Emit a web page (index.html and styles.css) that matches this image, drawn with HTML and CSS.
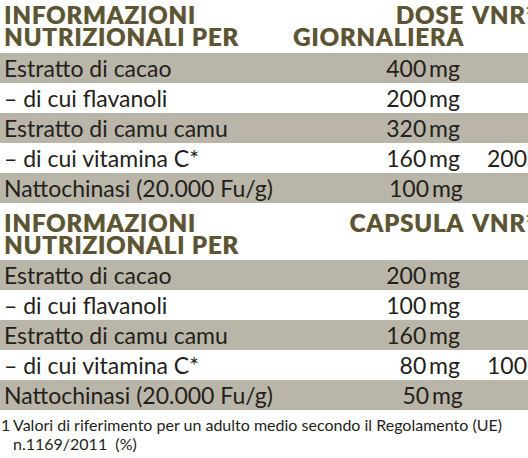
FILE: index.html
```html
<!DOCTYPE html>
<html lang="it">
<head>
    <meta charset="UTF-8">
    <meta name="viewport" content="width=device-width, initial-scale=1.0">
    <title>Informazioni nutrizionali</title>
    <link rel="stylesheet" href="styles.css">
</head>
<body>
    <div class="sheet">

        <!-- Per dose giornaliera -->
        <div class="head first">
            <div class="h-label">INFORMAZIONI<br>NUTRIZIONALI PER</div>
            <div class="h-dose">DOSE<br>GIORNALIERA</div>
            <div class="h-vnr">VNR<sup>1</sup></div>
        </div>
        <div class="row shade">
            <div class="label">Estratto di cacao</div>
            <div class="dose">400&#8201;mg</div>
            <div class="vnr"></div>
        </div>
        <div class="row">
            <div class="label">– di cui flavanoli</div>
            <div class="dose">200&#8201;mg</div>
            <div class="vnr"></div>
        </div>
        <div class="row shade">
            <div class="label">Estratto di camu camu</div>
            <div class="dose">320&#8201;mg</div>
            <div class="vnr"></div>
        </div>
        <div class="row">
            <div class="label">– di cui vitamina C*</div>
            <div class="dose">160&#8201;mg</div>
            <div class="vnr">200 %</div>
        </div>
        <div class="row shade">
            <div class="label">Nattochinasi (20.000 Fu/g)</div>
            <div class="dose">100&#8201;mg</div>
            <div class="vnr"></div>
        </div>

        <!-- Per capsula -->
        <div class="head second">
            <div class="h-label">INFORMAZIONI<br>NUTRIZIONALI PER</div>
            <div class="h-dose">CAPSULA</div>
            <div class="h-vnr">VNR<sup>1</sup></div>
        </div>
        <div class="row shade">
            <div class="label">Estratto di cacao</div>
            <div class="dose">200&#8201;mg</div>
            <div class="vnr"></div>
        </div>
        <div class="row">
            <div class="label">– di cui flavanoli</div>
            <div class="dose">100&#8201;mg</div>
            <div class="vnr"></div>
        </div>
        <div class="row shade">
            <div class="label">Estratto di camu camu</div>
            <div class="dose">160&#8201;mg</div>
            <div class="vnr"></div>
        </div>
        <div class="row">
            <div class="label">– di cui vitamina C*</div>
            <div class="dose">80&#8201;mg</div>
            <div class="vnr">100 %</div>
        </div>
        <div class="row shade">
            <div class="label">Nattochinasi (20.000 Fu/g)</div>
            <div class="dose">50&#8201;mg</div>
            <div class="vnr"></div>
        </div>

        <div class="note">
            <span class="num">1</span>
            <span class="txt">Valori di riferimento per un adulto medio secondo il Regolamento (UE) n.1169/2011 &nbsp;(%)</span>
        </div>
    </div>
</body>
</html>
```

FILE: styles.css
```css
* {
    box-sizing: border-box;
    margin: 0;
    padding: 0;
}
html, body {
    overflow: hidden;
    background: #fff;
}
body {
    width: 528px;
    height: 458px;
    font-family: Lato, "Noto Sans", sans-serif;
    color: #241f1b;
}
.sheet {
    width: 560px;
}
.head, .row {
    display: grid;
    grid-template-columns: 1fr 200px 90px;
}
.head {
    font-weight: 900;
    font-size: 24px;
    line-height: 22px;
    color: #5b5536;
    letter-spacing: 0.9px;
    text-shadow: 0.6px 0.4px 0 #8a7a4a;
}
.head.first {
    padding: 4px 0 8px 4px;
    height: 53px;
}
.head.second {
    padding: 9px 0 7px 4px;
    height: 57px;
}
.h-dose {
    text-align: right;
    padding-right: 6px;
}
.h-vnr {
    padding-left: 2px;
    white-space: nowrap;
}
.h-vnr sup {
    font-size: 12px;
    vertical-align: top;
    line-height: 12px;
}
.row {
    height: 30px;
    font-size: 23px;
    line-height: 30px;
}
.row.shade {
    background: #b9b5a8;
}
.label {
    padding-left: 4px;
    white-space: nowrap;
}
.dose {
    text-align: right;
    padding-right: 10px;
}
.vnr {
    padding-left: 17px;
    white-space: nowrap;
}
.note {
    display: flex;
    padding-top: 5px;
    font-size: 16px;
    line-height: 19px;
    width: 528px;
}
.note .num {
    width: 13px;
    padding-left: 1px;
    flex-shrink: 0;
}
.note .txt {
    padding-right: 22px;
}
```
